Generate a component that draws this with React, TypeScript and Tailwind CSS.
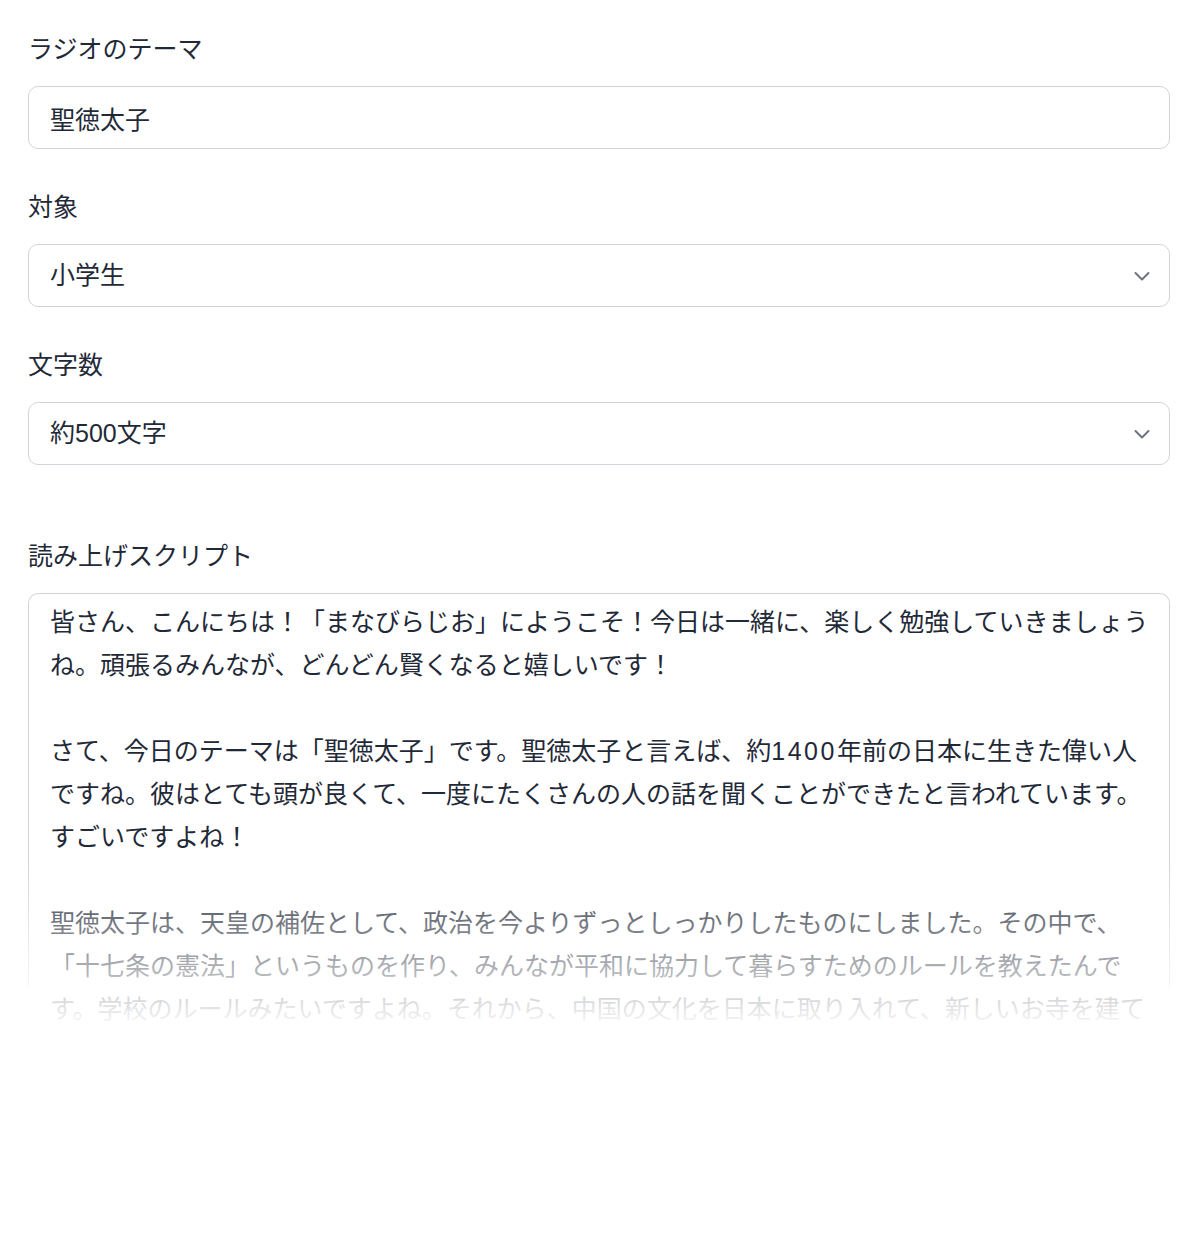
const para1 = "皆さん、こんにちは！「まなびらじお」にようこそ！今日は一緒に、楽しく勉強していきましょうね。頑張るみんなが、どんどん賢くなると嬉しいです！";
const para3 =
  "聖徳太子は、天皇の補佐として、政治を今よりずっとしっかりしたものにしました。その中で、「十七条の憲法」というものを作り、みんなが平和に協力して暮らすためのルールを教えたんです。学校のルールみたいですよね。それから、中国の文化を日本に取り入れて、新しいお寺を建てたりもしました。";

function ChevronIcon() {
  return (
    <svg
      aria-hidden="true"
      viewBox="0 0 16 10"
      className="pointer-events-none absolute right-[20px] top-1/2 h-[10px] w-[16px] -translate-y-1/2 text-[#6b7280]"
      fill="none"
      stroke="currentColor"
      strokeWidth="2"
      strokeLinecap="round"
      strokeLinejoin="round"
    >
      <path d="M1.5 2 8 8.5l6.5-6.5" />
    </svg>
  );
}

function Label({ children }: { children: React.ReactNode }) {
  return <label className="mb-[19px] block text-[25px] leading-[36px] text-[#1f2937]">{children}</label>;
}

function SelectField({ label, value, options }: { label: string; value: string; options: string[] }) {
  return (
    <div>
      <Label>{label}</Label>
      <div className="relative">
        <select
          defaultValue={value}
          className="h-[63px] w-full appearance-none rounded-[10px] border border-[#d1d5db] bg-white pl-[21px] pr-[50px] text-[25px] text-[#1f2937] outline-none"
        >
          {options.map((o) => (
            <option key={o}>{o}</option>
          ))}
        </select>
        <ChevronIcon />
      </div>
    </div>
  );
}

export default function App() {
  return (
    <div
      lang="ja"
      className="min-h-[1241px] bg-white pl-[28px] pr-[30px] pt-[31px] font-['Liberation_Sans','Noto_Sans_CJK_JP',sans-serif] [text-spacing-trim:space-all]"
    >
      <div className="flex flex-col gap-[40px]">
        <div>
          <Label>ラジオのテーマ</Label>
          <input
            type="text"
            defaultValue="聖徳太子"
            className="h-[63px] w-full rounded-[10px] border border-[#d1d5db] bg-white px-[21px] text-[25px] text-[#1f2937] outline-none"
          />
        </div>

        <SelectField label="対象" value="小学生" options={["幼児", "小学生", "中学生", "高校生"]} />
        <SelectField label="文字数" value="約500文字" options={["約300文字", "約500文字", "約1000文字"]} />

        <div className="mt-[33px]">
          <Label>読み上げスクリプト</Label>
          <div className="relative h-[437px] overflow-hidden">
            <div className="h-[394px] rounded-t-[10px] border-x border-t border-[#d1d5db] pl-[21px] pr-[12px] pt-[7px]">
              <div className="text-[25px] leading-[43px] text-[#1f2937]">
                <p>{para1}</p>
                <p className="mt-[43px]">
                  さて、今日のテーマは「聖徳太子」です。聖徳太子と言えば、約<span className="tracking-[2.5px]">1400</span>
                  年前の日本に生きた偉い人ですね。彼はとても頭が良くて、一度にたくさんの人の話を聞くことができたと言われています。すごいですよね！
                </p>
                <p className="mt-[43px]">{para3}</p>
              </div>
            </div>
            <div className="pointer-events-none absolute inset-x-0 bottom-0 h-[170px] bg-linear-to-b from-white/0 to-white" />
          </div>
        </div>
      </div>
    </div>
  );
}
